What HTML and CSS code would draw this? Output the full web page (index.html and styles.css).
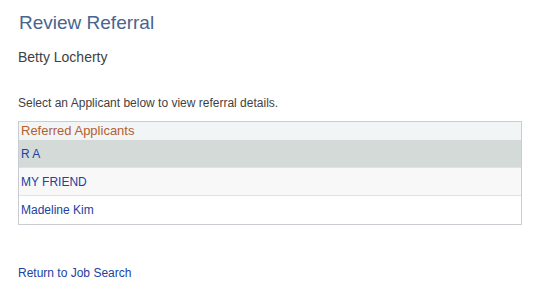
FILE: index.html
```html
<!DOCTYPE html>
<html>
<head>
<meta charset="utf-8">
<link rel="stylesheet" href="styles.css">
</head>
<body>
<div class="page">
  <h1 class="title">Review Referral</h1>
  <div class="name">Betty Locherty</div>
  <p class="instr">Select an Applicant below to view referral details.</p>
  <div class="grid">
    <div class="grid-head">Referred Applicants</div>
    <a class="row row-sel" href="#">R A</a>
    <a class="row row-alt" href="#">MY FRIEND</a>
    <a class="row row-last" href="#">Madeline Kim</a>
  </div>
  <a class="back" href="#">Return to Job Search</a>
</div>
</body>
</html>
```
FILE: styles.css
```css
html, body { margin: 0; padding: 0; background: #fff; }
body { font-family: "Liberation Sans", Arial, sans-serif; }
.page { padding: 11px 18px 0 18px; display: flex; flex-direction: column; align-items: flex-start; }
.title { margin: 0 0 0 1px; font-size: 19px; font-weight: normal; color: #466590; line-height: 23px; }
.name { margin-top: 15px; font-size: 14px; color: #3f3f3f; line-height: 17px; }
.instr { margin: 30px 0 0 0; font-size: 12px; color: #3f3f3f; line-height: 15px; }
.grid { margin-top: 10px; width: 504px; border: 1px solid #c9cdd1; display: flex; flex-direction: column; box-sizing: border-box; }
.grid-head { background: #f1f5f6; color: #b5602c; font-size: 13px; line-height: 18px; height: 18px; padding: 0 2px; }
.row { display: block; font-size: 12px; color: #2142a0; text-decoration: none; padding: 7px 2px 0 2px; height: 28px; box-sizing: border-box; background: #fff; border-bottom: 1px solid #e1e3e3; line-height: 15px; }
.row-sel { background: #d4dad8; }
.row-alt { background: #f8f8f8; }
.row-last { border-bottom: 0; height: 28px; }
.back { margin-top: 41px; font-size: 12px; color: #2142a0; text-decoration: none; line-height: 15px; }
```
